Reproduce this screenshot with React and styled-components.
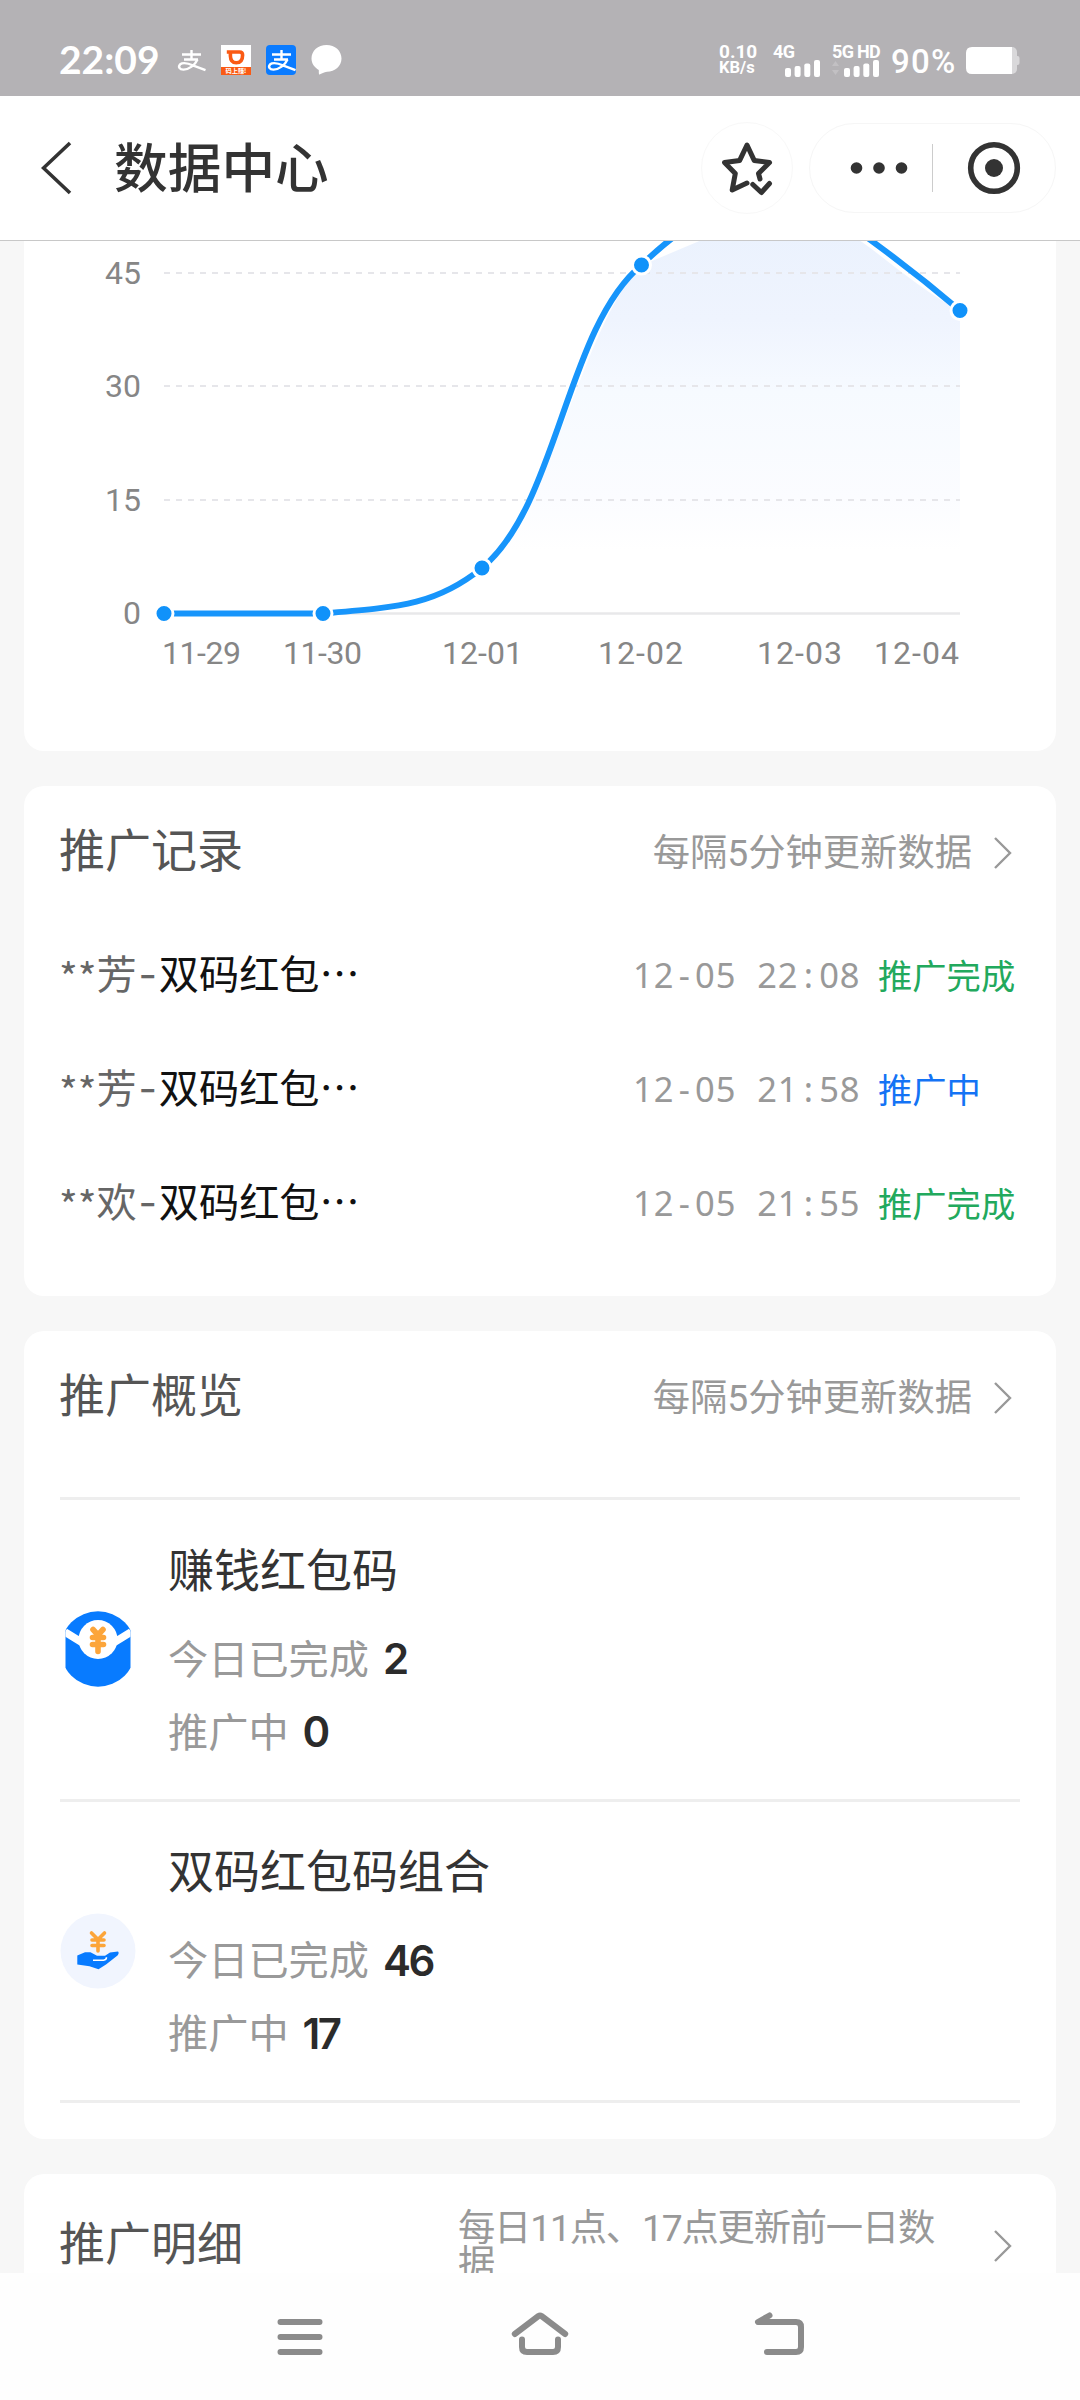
import React from "react";
import styled, { createGlobalStyle } from "styled-components";

const records = [
  { user: "芳", name: "双码红包…", date: "12-05", time: "22:08", done: true },
  { user: "芳", name: "双码红包…", date: "12-05", time: "21:58", done: false },
  { user: "欢", name: "双码红包…", date: "12-05", time: "21:55", done: true },
];

const gridLines = [
  { label: "45", y: 32 },
  { label: "30", y: 145 },
  { label: "15", y: 259 },
];

const points = [
  { x: 140, y: 372.5 },
  { x: 299, y: 372.5 },
  { x: 458, y: 327 },
  { x: 617.5, y: 24 },
  { x: 936, y: 69.5 },
];

const dates = [
  { label: "11-29", x: 138, width: 79 },
  { label: "11-30", x: 259, width: 79 },
  { label: "12-01", x: 418, width: 81 },
  { label: "12-02", x: 574, width: 85 },
  { label: "12-03", x: 733, width: 85 },
  { label: "12-04", x: 850, width: 85 },
];

const AlipayMark = () => (
  <svg width="30" height="30" viewBox="0 0 30 30" fill="none" stroke="#fff" strokeWidth="2.4">
    <path d="M6 9.5H25M15.5 5V14.5M8 14.5H22" />
    <path d="M21.5 14.5C19 20 13 24.6 7.5 24.6C3.5 24.6 1.8 21.6 4.2 19.3C7.5 16.6 13 18.6 17.5 20.6L29.5 25.2" />
  </svg>
);

const DidiIcon = () => (
  <svg width="30" height="30" viewBox="0 0 30 30">
    <rect width="30" height="30" fill="#fff" />
    <path
      d="M5.8 7H18.5Q21.6 7 21.6 10Q21.6 17.8 15.2 17.8Q9.6 17.8 9.4 11V8"
      fill="none"
      stroke="#fa5a14"
      strokeWidth="3.6"
    />
    <rect y="22" width="30" height="8" fill="#fa5a14" />
    <text x="15" y="28.4" textAnchor="middle" fontSize="6.2" fontWeight="700" fill="#fff">
      码上赚!
    </text>
  </svg>
);

const BubbleIcon = () => (
  <svg width="31" height="30" viewBox="0 0 31 30" fill="#fff">
    <path d="M15.5 0C24 0 30.5 5.8 30.5 13.5C30.5 21 24 26.8 16 26.8C13 27.2 10.5 28.8 8.5 29.6C8 29.6 7.8 29 7.8 25C3.5 22.5 .5 18.5 .5 13.5C.5 5.8 7 0 15.5 0Z" />
  </svg>
);

const SignalBars = ({ arrows }) => (
  <svg width="47" height="17" viewBox="0 0 47 17">
    {arrows && <path d="M0 6L3.5 1L7 6ZM0 10L3.5 15L7 10Z" fill="#c2c0c3" />}
    <rect x="12" y="8" width="6" height="9" rx="2" fill="#fff" />
    <rect x="21.6" y="6" width="6" height="11" rx="2" fill="#fff" />
    <rect x="31.3" y="3.5" width="6" height="13.5" rx="2" fill="#fff" />
    <rect x="41" y="0" width="6" height="17" rx="2" fill="#fff" />
  </svg>
);

const BatteryIcon = () => (
  <svg width="54" height="27" viewBox="0 0 54 27">
    <rect x="40" width="11" height="27" rx="5" fill="#d9d8da" />
    <rect x="48" y="9" width="5.5" height="9" rx="2" fill="#d9d8da" />
    <path d="M6 0H46V27H6Q0 27 0 21V6Q0 0 6 0Z" fill="#fff" />
  </svg>
);

const StarIcon = () => (
  <svg width="90" height="90" viewBox="0 0 90 90" fill="none" stroke="#333" strokeWidth="5" strokeLinecap="round" strokeLinejoin="round">
    <path d="M58 56L56.5 50.5L67.5 39.5L52.2 37.4L45 22L37.7 37.4L22.5 39.5L33.3 50.5L30.2 67L45 60" />
    <path d="M50.8 61.5L59.4 69.5L67.5 60.5" />
  </svg>
);

const ArrowRight = () => (
  <svg width="18" height="32" viewBox="0 0 18 32" fill="none" stroke="#999" strokeWidth="2.4">
    <path d="M1 1L16 16L1 31" />
  </svg>
);

const EnvelopeIcon = () => (
  <svg width="76" height="76" viewBox="0 0 76 76">
    <clipPath id="envelope">
      <rect x="5.5" y="0" width="65" height="76" />
    </clipPath>
    <g clipPath="url(#envelope)">
      <circle cx="38" cy="38" r="37.7" fill="#087bff" />
      <path d="M5 21L22 31.5M71 21L54 31.5" stroke="#fff" strokeWidth="7.5" />
    </g>
    <circle cx="38" cy="28.5" r="19.5" fill="#fff" />
    <path
      d="M33 18.5L38 24L43 18.5M32.5 26.5H43.5M32.5 33.5H43.5M38 24V40.5"
      fill="none"
      stroke="#fca53a"
      strokeWidth="5.6"
      strokeLinecap="round"
    />
  </svg>
);

const HandIcon = () => (
  <svg width="76" height="76" viewBox="0 0 76 76">
    <circle cx="38" cy="38" r="37.5" fill="#f1f5fe" />
    <path
      d="M31.5 20L38 26.5L44.5 20M32 27H44M32 32.5H44M38 26V38"
      fill="none"
      stroke="#fca53a"
      strokeWidth="3.6"
      strokeLinecap="round"
    />
    <path
      d="M17.3 42.5L25 39.2H30.5L37 42.8H45L50 39.6L58 38.6Q59.5 40 57.5 42.5L46 51.5L38.5 56.3L29.5 53.3L17.3 51.4Z"
      fill="#087bff"
    />
    <path d="M33 47.3H43.5Q46.5 47 46.5 44.3" fill="none" stroke="#fff" strokeWidth="1.5" />
  </svg>
);

const TrendChart = () => (
  <svg width="1032" height="510" viewBox="0 0 1032 510">
    <defs>
      <linearGradient id="area" gradientUnits="userSpaceOnUse" x1="0" y1="-46" x2="0" y2="310">
        <stop offset="0" stopColor="#e9f1fd" />
        <stop offset="0.35" stopColor="#eff4fe" />
        <stop offset="0.55" stopColor="#f6faff" />
        <stop offset="0.85" stopColor="#fbfcff" />
        <stop offset="1" stopColor="#fff" />
      </linearGradient>
    </defs>
    <path
      d="M299 372.5L458 327C530 268 555 90 617.5 24C670 4 730 -28 777 -30C830 -18 880 42 936 69.5V372.5Z"
      fill="url(#area)"
    />
    {gridLines.map((line) => (
      <g key={line.label}>
        <path d={`M140 ${line.y}H936`} stroke="#e6e6ea" strokeWidth="2" strokeDasharray="6 6" />
        <AxisText x="117" y={line.y + 10.5} textAnchor="end">
          {line.label}
        </AxisText>
      </g>
    ))}
    <AxisText x="117" y="383" textAnchor="end">
      0
    </AxisText>
    <path d="M140 372.5H936" stroke="#e8e8ea" strokeWidth="2.5" />
    <path
      d="M140 372.5H299C376 366 412 364 458 327C534 264 542 87 617.5 24C666 -23 716 -51 777 -46C816 -26 886 27 936 69.5"
      fill="none"
      stroke="#1795fb"
      strokeWidth="6"
    />
    {points.map((point) => (
      <circle key={point.x} cx={point.x} cy={point.y} r="9" fill="#1092fa" stroke="#fff" strokeWidth="3" />
    ))}
    {dates.map((date) => (
      <AxisText key={date.label} x={date.x} y="423" textLength={date.width}>
        {date.label}
      </AxisText>
    ))}
  </svg>
);

const SectionHeader = ({ title, note, narrow }) => (
  <Header $tall={narrow}>
    <SectionTitle>{title}</SectionTitle>
    <More>
      <Note $narrow={narrow}>{note}</Note>
      <ArrowRight />
    </More>
  </Header>
);

const RecordRow = ({ record }) => (
  <Row>
    <RecordName>
      <UserName>
        <Mask>**</Mask>
        {record.user}
        <Hyphen>-</Hyphen>
      </UserName>
      {record.name}
    </RecordName>
    <RecordTime>
      {record.date.split("-")[0]}
      <Separator>-</Separator>
      {record.date.split("-")[1]}
      <Separator> </Separator>
      {record.time.split(":")[0]}
      <Separator>:</Separator>
      {record.time.split(":")[1]}
    </RecordTime>
    <RecordStatus $done={record.done}>{record.done ? "推广完成" : "推广中"}</RecordStatus>
  </Row>
);

const OverviewItem = ({ icon, title, finished, running }) => (
  <Item>
    {icon}
    <ItemBody>
      <ItemTitle>{title}</ItemTitle>
      <ItemLine>
        今日已完成<Count>{finished}</Count>
      </ItemLine>
      <ItemLine>
        推广中<Count>{running}</Count>
      </ItemLine>
    </ItemBody>
  </Item>
);

const App = () => {
  return (
    <Screen>
      <GlobalStyle />
      <StatusBar>
        <Clock>22:09</Clock>
        <StatusIcons>
          <AlipayMark />
          <DidiIcon />
          <AlipayTile>
            <AlipayMark />
          </AlipayTile>
          <BubbleIcon />
        </StatusIcons>
        <Speed>
          <SpeedValue>0.10</SpeedValue>
          <SpeedUnit>KB/s</SpeedUnit>
        </Speed>
        <Signal>
          4G
          <SignalBars />
        </Signal>
        <Signal>
          5G HD
          <SignalBars arrows />
        </Signal>
        <BatteryText>90%</BatteryText>
        <BatteryIcon />
      </StatusBar>

      <TitleBar>
        <svg width="32" height="54" viewBox="0 0 32 54" fill="none" stroke="#333" strokeWidth="3.6">
          <path d="M29 2L2.5 27L29 52" />
        </svg>
        <PageTitle>数据中心</PageTitle>
        <StarButton>
          <StarIcon />
        </StarButton>
        <Capsule>
          <svg width="58" height="14" viewBox="0 0 58 14" fill="#333">
            <circle cx="6.5" cy="7" r="5.8" />
            <circle cx="29" cy="7" r="5.8" />
            <circle cx="51.5" cy="7" r="5.8" />
          </svg>
          <CapsuleDivider />
          <svg width="54" height="54" viewBox="0 0 54 54">
            <circle cx="27" cy="27" r="23.3" fill="none" stroke="#333" strokeWidth="5.6" />
            <circle cx="27" cy="27" r="9" fill="#333" />
          </svg>
        </Capsule>
      </TitleBar>

      <Content>
        <ChartCard>
          <TrendChart />
        </ChartCard>

        <Card>
          <SectionHeader title="推广记录" note="每隔5分钟更新数据" />
          {records.map((record) => (
            <RecordRow key={record.time} record={record} />
          ))}
        </Card>

        <Card>
          <SectionHeader title="推广概览" note="每隔5分钟更新数据" />
          <ItemList>
            <OverviewItem icon={<EnvelopeIcon />} title="赚钱红包码" finished="2" running="0" />
            <OverviewItem icon={<HandIcon />} title="双码红包码组合" finished="46" running="17" />
          </ItemList>
        </Card>

        <Card>
          <SectionHeader title="推广明细" note="每日11点、17点更新前一日数据" narrow />
        </Card>
      </Content>

      <NavBar>
        <svg width="60" height="60" viewBox="0 0 60 60">
          <path d="M10.5 15H49.5M10.5 30H49.5M10.5 45H49.5" />
        </svg>
        <svg width="60" height="60" viewBox="0 0 60 60">
          <path d="M4.8 27L28.5 9Q30 8 31.5 9L55.2 27M12 32.5V40Q12 45 17 45H43Q48 45 48 40V32.5" />
        </svg>
        <svg width="60" height="60" viewBox="0 0 60 60">
          <path d="M19.5 8.5L8 15H46Q51 15 51 20V40Q51 45 46 45H17" />
        </svg>
      </NavBar>
    </Screen>
  );
};

export default App;

const GlobalStyle = createGlobalStyle`
  body {
    margin: 0;
    font-family: "Noto Sans CJK SC", sans-serif;
  }

  * {
    box-sizing: border-box;
  }

  svg {
    display: block;
    flex-shrink: 0;
  }
`;

const Screen = styled.div`
  width: 1080px;
  height: 2400px;
  display: flex;
  flex-direction: column;
  overflow: hidden;
  background: #f7f7f7;
`;

const StatusBar = styled.div`
  height: 96px;
  flex-shrink: 0;
  display: flex;
  align-items: center;
  padding: 24px 60px 0 59px;
  color: #fff;
  background: #b4b2b5;
  font-family: Roboto, sans-serif;
`;

const Clock = styled.div`
  width: 117px;
  font-family: Lato, sans-serif;
  font-size: 39px;
  font-weight: 700;
  line-height: 38px;
  margin-top: -2px;
`;

const StatusIcons = styled.div`
  display: flex;
  gap: 15px;
  flex: 1;
  font-family: "Noto Sans CJK SC", sans-serif;
`;

const AlipayTile = styled.div`
  background: #0a7bff;
  border-radius: 4px;
`;

const Speed = styled.div`
  width: 54px;
  font-weight: 700;
  white-space: nowrap;
`;

const SpeedValue = styled.div`
  font-size: 19px;
  line-height: 16px;
`;

const SpeedUnit = styled.div`
  font-size: 16.5px;
  line-height: 16px;
`;

const Signal = styled.div`
  width: 47px;
  margin-right: 12px;
  font-size: 18px;
  font-weight: 700;
  line-height: 16px;
  letter-spacing: -0.7px;
  white-space: nowrap;
`;

const BatteryText = styled.div`
  width: 75px;
  margin-top: 2px;
  font-size: 33px;
  font-weight: 500;
  letter-spacing: 1.2px;
`;

const TitleBar = styled.div`
  height: 145px;
  flex-shrink: 0;
  display: flex;
  align-items: center;
  padding: 0 24px 0 41px;
  background: #fff;
  border-bottom: 1px solid #c8c8c8;
`;

const PageTitle = styled.div`
  flex: 1;
  padding-left: 41px;
  margin-top: -7px;
  font-size: 53.7px;
  font-weight: 500;
  line-height: 72px;
  color: #333;
`;

const StarButton = styled.div`
  width: 92px;
  height: 92px;
  margin-right: 16px;
  border: 1px solid #f8f8f8;
  border-radius: 50%;
`;

const Capsule = styled.div`
  width: 247px;
  height: 90px;
  display: flex;
  align-items: center;
  padding-left: 40px;
  border: 1px solid #f6f6f6;
  border-radius: 45px;
`;

const CapsuleDivider = styled.div`
  width: 1px;
  height: 48px;
  margin: 0 34px 0 24px;
  background: #ccc;
`;

const Content = styled.div`
  flex: 1;
  min-height: 0;
  overflow: hidden;
  display: flex;
  flex-direction: column;
  gap: 35px;
  padding: 0 24px;
`;

const Card = styled.div`
  flex-shrink: 0;
  padding: 0 36px 38px;
  background: #fff;
  border-radius: 20px;
`;

const ChartCard = styled(Card)`
  padding: 0;
  border-radius: 0 0 20px 20px;
  overflow: hidden;
`;

const AxisText = styled.text`
  font-family: Roboto, sans-serif;
  font-size: 32px;
  fill: #868686;
`;

const Header = styled.div`
  height: ${({ $tall }) => ($tall ? "140px" : "130px")};
  display: flex;
  align-items: center;
  justify-content: space-between;
`;

const SectionTitle = styled.div`
  margin: -8px 0 0 -1px;
  font-size: 46px;
  line-height: 60px;
  color: #555;
`;

const More = styled.div`
  display: flex;
  align-items: center;
  gap: 22px;
  padding: 4px 8px 0 0;
`;

const Note = styled.div`
  width: ${({ $narrow }) => ($narrow ? "514px" : "auto")};
  padding-right: ${({ $narrow }) => ($narrow ? "24px" : "0")};
  font-family: Roboto, "Noto Sans CJK SC", sans-serif;
  font-size: 37.3px;
  line-height: 36px;
  letter-spacing: ${({ $narrow }) => ($narrow ? "-1.2px" : "0")};
  color: #999;
`;

const Row = styled.div`
  height: 114px;
  display: flex;
  align-items: center;
`;

const RecordName = styled.div`
  flex: 1;
  margin-left: -1px;
  font-size: 40.2px;
  line-height: 50px;
  color: #111;
`;

const UserName = styled.span`
  color: #666;
`;

/* asterisks sit too high next to the hanzi */
const Mask = styled.span`
  vertical-align: -4px;
  line-height: 1;
`;

const Hyphen = styled.span`
  display: inline-block;
  width: 22px;
  font-family: Inter, sans-serif;
  text-align: center;
`;

const RecordTime = styled.div`
  width: 245px;
  margin-top: 4px;
  font-family: "Noto Sans", sans-serif;
  font-size: 34.5px;
  line-height: 40px;
  letter-spacing: 0.95px;
  white-space: nowrap;
  color: #999;
`;

const Separator = styled.span`
  display: inline-block;
  width: 20.7px;
  text-align: center;
  white-space: pre;
`;

const RecordStatus = styled.div`
  width: 142px;
  margin-top: 2px;
  font-size: 34.3px;
  line-height: 40px;
  color: ${({ $done }) => ($done ? "#22a95d" : "#1473f5")};
`;

const ItemList = styled.div`
  margin-top: 36px;
  margin-bottom: -2px;
  border-top: 3px solid #eee;
`;

const Item = styled.div`
  height: 301.5px;
  display: flex;
  align-items: center;
  gap: 32px;
  border-bottom: 3px solid #eee;
`;

const ItemBody = styled.div`
  margin-top: -1px;
`;

const ItemTitle = styled.div`
  margin-bottom: 18px;
  font-size: 46px;
  line-height: 70px;
  color: #333;
`;

const ItemLine = styled.div`
  display: flex;
  align-items: center;
  gap: 14px;
  height: 73px;
  font-size: 40.2px;
  color: #999;
`;

const Count = styled.span`
  margin-top: 5px;
  font-family: Inter, sans-serif;
  font-size: 42px;
  font-weight: 600;
  letter-spacing: -2.5px;
  color: #2b2b2b;
`;

const NavBar = styled.div`
  height: 127px;
  flex-shrink: 0;
  display: flex;
  justify-content: center;
  gap: 180px;
  padding-top: 34px;
  background: #fefefe;

  path {
    fill: none;
    stroke: #8b8b8b;
    stroke-width: 6;
    stroke-linecap: round;
    stroke-linejoin: round;
  }
`;
